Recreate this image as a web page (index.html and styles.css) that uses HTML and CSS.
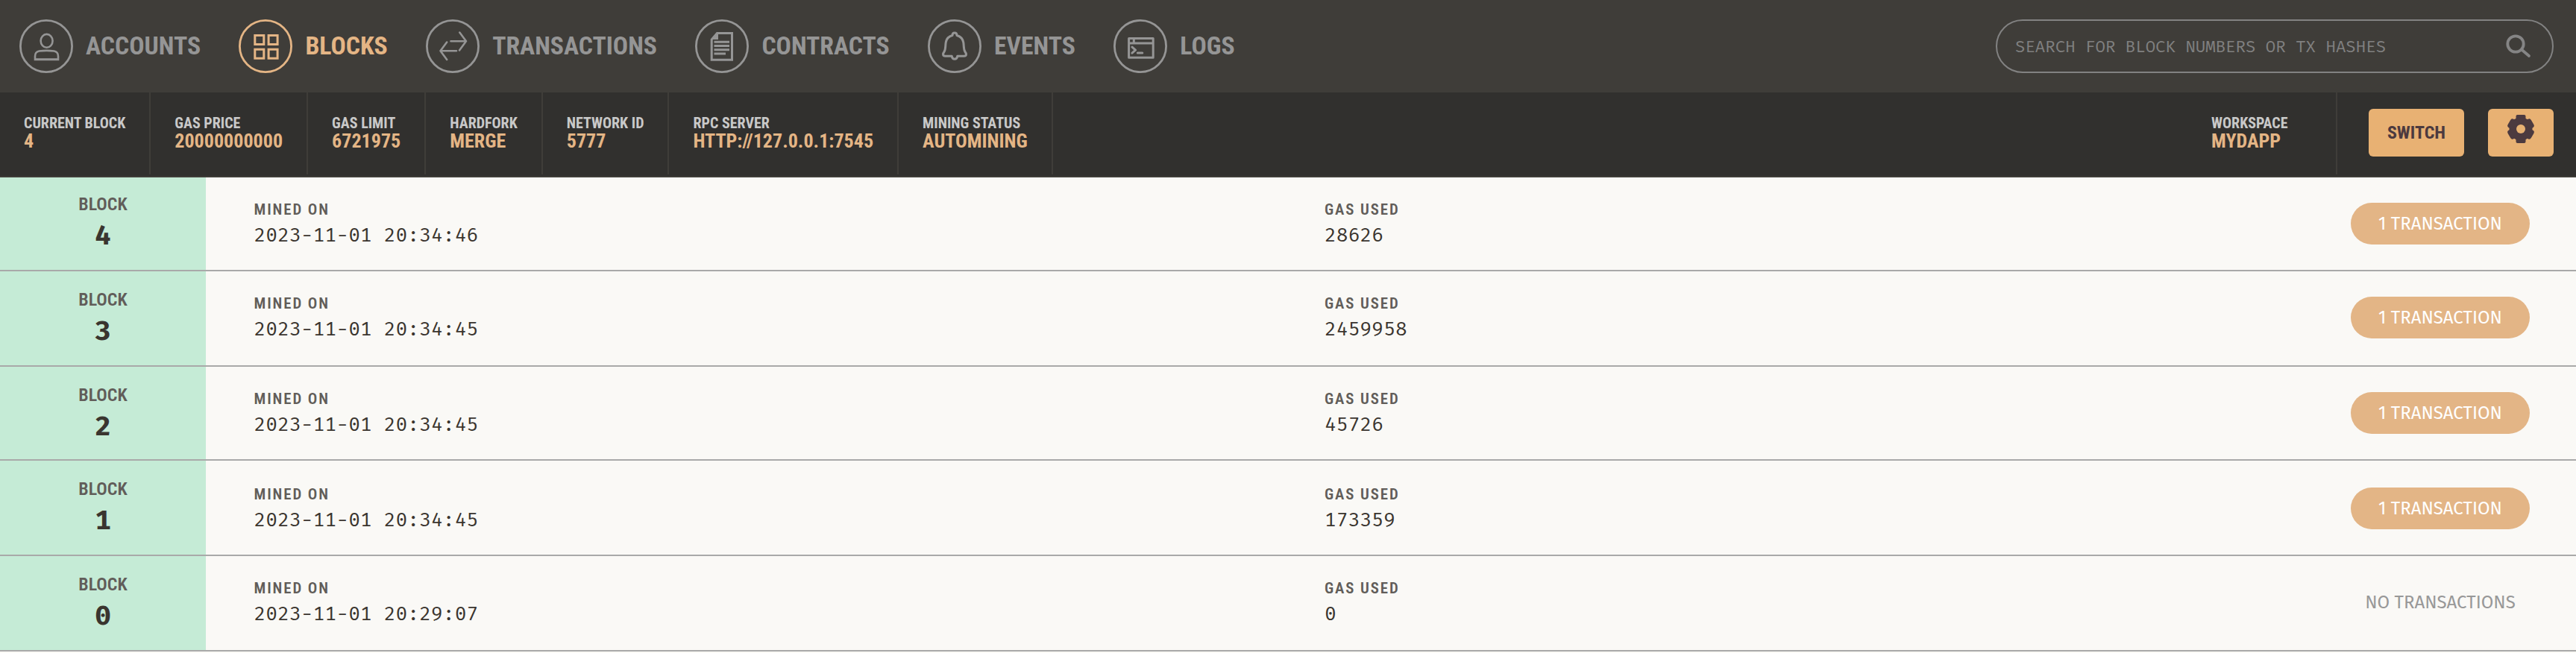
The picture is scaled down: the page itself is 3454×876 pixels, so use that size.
FILE: index.html
```html
<!DOCTYPE html>
<html lang="en">
<head>
<meta charset="utf-8">
<title>Blocks</title>
<link rel="stylesheet" href="styles.css">
</head>
<body>
<header class="topbar">
  <nav class="nav">
    <a class="nav-item"><svg class="icon" viewBox="0 0 72 72"><circle class="ring" cx="36" cy="36" r="34.6"/><ellipse cx="36.6" cy="28.8" rx="8" ry="8.9"/><path d="M21 54v-4.5q0-6 5.500-7q10-1.300 20 0q5.500 1 5.500 7V54z"/><path d="M20 53.500h33"/></svg><span>ACCOUNTS</span></a>
    <a class="nav-item active"><svg class="icon" viewBox="0 0 72 72"><circle class="ring" cx="36" cy="36" r="34.6"/><g class="heavy"><path d="M21.800 21.500h12v12h-12zM40.100 21.500h12v12h-12zM21.800 40.200h12v12h-12zM40.100 40.200h12v12h-12z"/></g></svg><span>BLOCKS</span></a>
    <a class="nav-item"><svg class="icon" viewBox="0 0 72 72"><circle class="ring" cx="36" cy="36" r="34.6"/><path class="round" d="M33.500 29.300H54M45.300 17.500L54 29.300L45 41.500M41 42.300H19.500M28.200 30.500L19.500 42.300L28.200 54"/></svg><span>TRANSACTIONS</span></a>
    <a class="nav-item"><svg class="icon" viewBox="0 0 72 72"><circle class="ring" cx="36" cy="36" r="34.6"/><g class="heavy"><path d="M22.200 27v27.200h27.300V18.500h-20z"/><path class="solid" d="M22 27l8-9h1v9z"/><path d="M25.500 30.300h20.500M25.500 35.600h20.500M25.500 40.800h20.500M25.500 46.100h15.500"/></g></svg><span>CONTRACTS</span></a>
    <a class="nav-item"><svg class="icon" viewBox="0 0 72 72"><circle class="ring" cx="36" cy="36" r="34.6"/><path class="round heavy" d="M33 21.500q0-3.500 3-3.500t3 3.500q7.500 2 8.800 9.500c.8 5 0 9 2.200 12.500q1.500 2 1.500 3.200q0 2.500-3 2.500H39.800q-.6 4-3.800 4t-3.800-4H23.500q-3 0-3-2.500q0-1.200 1.500-3.200c2.200-3.500 1.400-7.500 2.200-12.500q1.300-7.500 8.800-9.500z"/></svg><span>EVENTS</span></a>
    <a class="nav-item"><svg class="icon" viewBox="0 0 72 72"><circle class="ring" cx="36" cy="36" r="34.6"/><g class="round heavy"><path d="M20.600 25.500h32.600v25.800H20.600zM21 32h32M27.300 26v6"/><path d="M25 37.200l4.500 4l-4.500 4M32.300 45h6.500"/></g></svg><span>LOGS</span></a>
  </nav>
  <div class="search"><span>SEARCH FOR BLOCK NUMBERS OR TX HASHES</span><svg class="search-icon" viewBox="0 0 34 32"><circle cx="13" cy="13" r="10.700"/><path d="M21 20.500L31 29"/></svg></div>
</header>
<section class="status">
  <div class="stat"><span class="label">CURRENT BLOCK</span><span class="value">4</span></div>
  <div class="stat"><span class="label">GAS PRICE</span><span class="value">20000000000</span></div>
  <div class="stat"><span class="label">GAS LIMIT</span><span class="value">6721975</span></div>
  <div class="stat"><span class="label">HARDFORK</span><span class="value">MERGE</span></div>
  <div class="stat"><span class="label">NETWORK ID</span><span class="value">5777</span></div>
  <div class="stat"><span class="label">RPC SERVER</span><span class="value">HTTP://127.0.0.1:7545</span></div>
  <div class="stat"><span class="label">MINING STATUS</span><span class="value">AUTOMINING</span></div>
  <div class="stat workspace"><span class="label">WORKSPACE</span><span class="value">MYDAPP</span></div>
  <div class="actions">
    <button class="button switch">SWITCH</button>
    <button class="button settings"><svg class="gear" viewBox="-19 -19 38 38"><circle r="15.500"/><rect x="-6.500" y="-19" width="13" height="38" rx="2"/><rect x="-6.500" y="-18" width="13" height="36" rx="3" transform="rotate(60)"/><rect x="-6.500" y="-18" width="13" height="36" rx="3" transform="rotate(120)"/><circle class="hole" r="6"/></svg></button>
  </div>
</section>
<main class="blocks">
  <div class="row short first">
    <div class="number"><span class="title">BLOCK</span><span class="height">4</span></div>
    <div class="mined"><span class="caption">MINED ON</span><span class="data">2023-11-01 20:34:46</span></div>
    <div class="gas"><span class="caption">GAS USED</span><span class="data">28626</span></div>
    <div class="count"><span class="pill">1 TRANSACTION</span></div>
  </div>
  <div class="row">
    <div class="number"><span class="title">BLOCK</span><span class="height">3</span></div>
    <div class="mined"><span class="caption">MINED ON</span><span class="data">2023-11-01 20:34:45</span></div>
    <div class="gas"><span class="caption">GAS USED</span><span class="data">2459958</span></div>
    <div class="count"><span class="pill">1 TRANSACTION</span></div>
  </div>
  <div class="row short">
    <div class="number"><span class="title">BLOCK</span><span class="height">2</span></div>
    <div class="mined"><span class="caption">MINED ON</span><span class="data">2023-11-01 20:34:45</span></div>
    <div class="gas"><span class="caption">GAS USED</span><span class="data">45726</span></div>
    <div class="count"><span class="pill">1 TRANSACTION</span></div>
  </div>
  <div class="row lower">
    <div class="number"><span class="title">BLOCK</span><span class="height">1</span></div>
    <div class="mined"><span class="caption">MINED ON</span><span class="data">2023-11-01 20:34:45</span></div>
    <div class="gas"><span class="caption">GAS USED</span><span class="data">173359</span></div>
    <div class="count"><span class="pill">1 TRANSACTION</span></div>
  </div>
  <div class="row">
    <div class="number"><span class="title">BLOCK</span><span class="height">0</span></div>
    <div class="mined"><span class="caption">MINED ON</span><span class="data">2023-11-01 20:29:07</span></div>
    <div class="gas"><span class="caption">GAS USED</span><span class="data">0</span></div>
    <div class="count"><span class="pill none">NO TRANSACTIONS</span></div>
  </div>
</main>
</body>
</html>
```
FILE: styles.css
```css
* { box-sizing: border-box; }
body { margin: 0; height: 876px; background: #faf9f6; font-family: "Roboto Condensed", Roboto, sans-serif; font-stretch: 75%; white-space: nowrap; overflow: hidden; }

.topbar { display: flex; justify-content: space-between; align-items: center; height: 124px; padding: 0 30px 0 26px; background: #3f3d39; }
.nav { display: flex; gap: 51.4px; }
.nav-item { display: flex; align-items: center; gap: 17px; color: #959595; font-size: 33.7px; font-weight: 700; line-height: 70px; }
.nav-item span { padding-bottom: 1px; }
.nav-item.active { color: #e4b585; }
.icon { width: 72px; height: 72px; fill: none; stroke: currentColor; stroke-width: 2.6; }
.ring { stroke-width: 2.8; }
.heavy { stroke-width: 3; }
.round { stroke-linecap: round; stroke-linejoin: round; }
.solid { fill: currentColor; stroke: none; }

.search { display: flex; align-items: center; justify-content: space-between; width: 748px; height: 72px; padding: 0 28px 0 24px; border: 2px solid #828282; border-radius: 36px; color: #808080; font: 300 22.4px "Fira Mono", "Liberation Mono", monospace; }
.search-icon { width: 34px; height: 32px; fill: none; stroke: #858585; stroke-width: 3.8; stroke-linecap: round; }

.status { display: flex; height: 114px; padding-bottom: 2px; background: #31302e; border-bottom: 2px solid #3e3c38; }
.stat { display: flex; flex-direction: column; height: 110px; padding: 30px 32px 0; border-right: 2px solid #3f3d39; font-weight: 700; }
.label { color: #c9c9c9; font-size: 20px; line-height: 22px; }
.value { color: #e4b585; font-size: 26.05px; line-height: 26px; }
.workspace { width: 201px; margin-left: auto; }
.actions { display: flex; gap: 32px; padding: 22px 30px 0 42px; }
.button { height: 64px; padding: 0; border: 0; border-radius: 6px; background: #e8b173; color: #4c3a3f; font: 700 24px "Roboto Condensed", Roboto, sans-serif; }
.switch { width: 128px; }
.settings { display: flex; justify-content: center; width: 88px; padding-top: 8px; }
.gear { width: 38px; height: 38px; fill: #4c3a3f; }
.hole { fill: #e8b173; }

.row { display: grid; grid-template-columns: 276px 1435.5px 1fr 302px; height: 128px; border-bottom: 2px solid #a9a9a9; }
.row.short { height: 126px; }
.number { display: flex; flex-direction: column; align-items: center; padding-top: 24px; background: #c5ebd6; }
.first .number { padding-top: 22px; }
.title { color: #615d59; font-size: 24px; font-weight: 600; line-height: 28px; }
.height { margin-top: 6px; color: #3a352f; font: 700 37px/44px "Fira Mono", monospace; }
.mined, .gas { display: flex; flex-direction: column; padding: 31px 64px 0 64.5px; }
.lower .mined, .lower .gas { padding-top: 33px; }
.caption { color: #615d59; font-size: 20.8px; font-weight: 600; line-height: 24px; letter-spacing: 1.9px; }
.data { color: #3a352f; font: 400 26.4px/44px "Fira Mono", monospace; }
.count { padding-top: 34px; }
.lower .count { padding-top: 36px; }
.pill { display: block; width: 240px; height: 56px; border-radius: 28px; background: #e3b586; color: #fff; font: 400 24px/56px "Fira Sans", sans-serif; text-align: center; }
.pill.none { background: none; color: #989898; }
```
